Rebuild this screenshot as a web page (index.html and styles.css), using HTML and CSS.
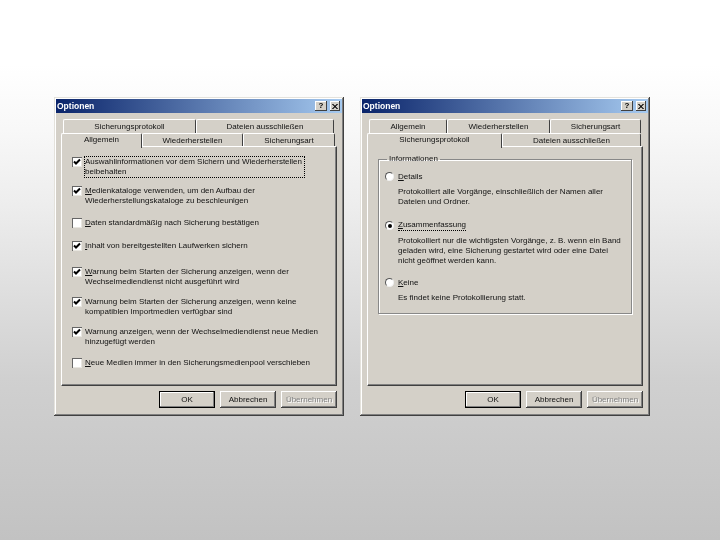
FILE: index.html
```html
<!DOCTYPE html>
<html lang="de">
<head>
<meta charset="utf-8">
<title>Optionen</title>
<link rel="stylesheet" href="styles.css">
</head>
<body>
<section class="window win-left">
  <header class="titlebar">
    <span class="title">Optionen</span>
    <span class="caption-btn help">?</span>
    <span class="caption-btn close"><svg viewBox="0 0 7 6" width="6" height="5"><path d="M0 0 6 6M1 0 7 6M6 0 0 6M7 0 1 6" stroke="#000" stroke-width="0.9" fill="none"/></svg></span>
  </header>
  <div class="tabs">
    <div class="tab-row row-back">
      <div class="tab w133">Sicherungsprotokoll</div>
      <div class="tab w138">Dateien ausschließen</div>
    </div>
    <div class="tab-row">
      <div class="tab active w81">Allgemein</div>
      <div class="tab w101">Wiederherstellen</div>
      <div class="tab w92">Sicherungsart</div>
    </div>
  </div>
  <div class="panel options">
    <div class="check on"><span class="box"><svg viewBox="0 0 8 8" width="8" height="8"><path d="M1 3.5 3 5.5 7 1.5" stroke="#000" stroke-width="2" fill="none"/></svg></span><span class="label focus">Auswahlinformationen vor dem Sichern und Wiederherstellen<br>beibehalten</span></div>
    <div class="check on gap-9"><span class="box"><svg viewBox="0 0 8 8" width="8" height="8"><path d="M1 3.5 3 5.5 7 1.5" stroke="#000" stroke-width="2" fill="none"/></svg></span><span class="label"><u>M</u>edienkataloge verwenden, um den Aufbau der<br>Wiederherstellungskataloge zu beschleunigen</span></div>
    <div class="check gap-12"><span class="box"></span><span class="label"><u>D</u>aten standardmäßig nach Sicherung bestätigen</span></div>
    <div class="check on gap-13"><span class="box"><svg viewBox="0 0 8 8" width="8" height="8"><path d="M1 3.5 3 5.5 7 1.5" stroke="#000" stroke-width="2" fill="none"/></svg></span><span class="label"><u>I</u>nhalt von bereitgestellten Laufwerken sichern</span></div>
    <div class="check on gap-16"><span class="box"><svg viewBox="0 0 8 8" width="8" height="8"><path d="M1 3.5 3 5.5 7 1.5" stroke="#000" stroke-width="2" fill="none"/></svg></span><span class="label"><u>W</u>arnung beim Starten der Sicherung anzeigen, wenn der<br>Wechselmediendienst nicht ausgeführt wird</span></div>
    <div class="check on gap-10"><span class="box"><svg viewBox="0 0 8 8" width="8" height="8"><path d="M1 3.5 3 5.5 7 1.5" stroke="#000" stroke-width="2" fill="none"/></svg></span><span class="label">Warnung beim Starten der Sicherung anzeigen, wenn keine<br>kompatiblen Importmedien verfügbar sind</span></div>
    <div class="check on gap-10"><span class="box"><svg viewBox="0 0 8 8" width="8" height="8"><path d="M1 3.5 3 5.5 7 1.5" stroke="#000" stroke-width="2" fill="none"/></svg></span><span class="label">Warnung anzeigen, wenn der Wechselmediendienst neue Medien<br>hinzugefügt werden</span></div>
    <div class="check gap-11"><span class="box"></span><span class="label"><u>N</u>eue Medien immer in den Sicherungsmedienpool verschieben</span></div>
  </div>
  <footer class="buttons">
    <span class="btn default">OK</span>
    <span class="btn">Abbrechen</span>
    <span class="btn disabled">Übernehmen</span>
  </footer>
</section>

<section class="window win-right">
  <header class="titlebar">
    <span class="title">Optionen</span>
    <span class="caption-btn help">?</span>
    <span class="caption-btn close"><svg viewBox="0 0 7 6" width="6" height="5"><path d="M0 0 6 6M1 0 7 6M6 0 0 6M7 0 1 6" stroke="#000" stroke-width="0.9" fill="none"/></svg></span>
  </header>
  <div class="tabs">
    <div class="tab-row row-back">
      <div class="tab w78">Allgemein</div>
      <div class="tab w103">Wiederherstellen</div>
      <div class="tab w91">Sicherungsart</div>
    </div>
    <div class="tab-row">
      <div class="tab active w135">Sicherungsprotokoll</div>
      <div class="tab w139">Dateien ausschließen</div>
    </div>
  </div>
  <div class="panel log">
    <fieldset class="group">
      <legend>Informationen</legend>
      <div class="radio"><span class="dot"></span><span class="label"><u>D</u>etails</span></div>
      <p class="desc">Protokolliert alle Vorgänge, einschließlich der Namen aller<br>Dateien und Ordner.</p>
      <div class="radio gap-radio"><span class="dot sel"></span><span class="label focus-line"><u>Z</u>usammenfassung</span></div>
      <p class="desc">Protokolliert nur die wichtigsten Vorgänge, z. B. wenn ein Band<br>geladen wird, eine Sicherung gestartet wird oder eine Datei<br>nicht geöffnet werden kann.</p>
      <div class="radio gap-radio-2"><span class="dot"></span><span class="label"><u>K</u>eine</span></div>
      <p class="desc">Es findet keine Protokollierung statt.</p>
    </fieldset>
  </div>
  <footer class="buttons">
    <span class="btn default">OK</span>
    <span class="btn">Abbrechen</span>
    <span class="btn disabled">Übernehmen</span>
  </footer>
</section>
</body>
</html>
```
FILE: styles.css
```css
* { box-sizing: border-box; }
html, body { margin: 0; height: 100%; }
body {
  position: relative;
  width: 720px;
  height: 540px;
  overflow: hidden;
  background: linear-gradient(#ffffff 0%, #ffffff 12%, #f8f8f8 24%, #eeeeee 37%, #d0d0d0 70%, #c2c2c2 100%);
  font: 8px/10px "Liberation Sans", Arial, sans-serif;
  color: #111;
}
.window {
  position: absolute;
  top: 97px;
  width: 290px;
  height: 319px;
  background: #d4d0c8;
  box-shadow: inset -1px -1px 0 #404040, inset 1px 1px 0 #e4e2dc, inset -2px -2px 0 #808080, inset 2px 2px 0 #fff;
  padding: 2px 7px 0;
  display: flex;
  flex-direction: column;
  filter: blur(0.3px);
}
.win-left { left: 54px; }
.win-right { left: 360px; }
.titlebar {
  height: 14px;
  margin: 0 -5px;
  padding: 0 2px 0 1px;
  display: flex;
  align-items: center;
  gap: 3px;
  background: linear-gradient(90deg, #0a246a, #a6caf0);
}
.title { flex: 1; color: #fff; font-weight: bold; font-size: 8.5px; }
.caption-btn {
  width: 10px;
  height: 10px;
  background: #d4d0c8;
  box-shadow: inset -1px -1px 0 #404040, inset 1px 1px 0 #fff;
  display: flex;
  align-items: center;
  justify-content: center;
  font-weight: bold;
  color: #000;
  line-height: 10px;
}
.help { width: 12px; }
.tabs { margin-top: 6px; width: 276px; }
.tab-row { display: flex; align-items: flex-end; height: 14px; }
.row-back { padding-left: 2px; }
.tab {
  height: 14px;
  text-align: center;
  line-height: 14px;
  border: 1px solid #fff;
  border-bottom: 0;
  border-right: 1px solid #404040;
  border-radius: 2px 2px 0 0;
  background: #d4d0c8;
}
.tab.active {
  position: relative;
  z-index: 1;
  height: 15px;
  margin-bottom: -1px;
  line-height: 11px;
}
.w78 { width: 78px; }
.w81 { width: 81px; }
.w91 { width: 91px; }
.w92 { width: 92px; }
.w101 { width: 101px; }
.w103 { width: 103px; }
.w133 { width: 133px; }
.w135 { width: 135px; }
.w138 { width: 138px; }
.w139 { width: 139px; }
.panel {
  width: 276px;
  height: 240px;
  margin-top: -1px;
  border: 1px solid;
  border-color: #fff #404040 #404040 #fff;
  box-shadow: inset -1px -1px 0 #808080;
}
.options { padding: 10px 0 0 10px; }
.check { display: flex; align-items: flex-start; }
.gap-9 { margin-top: 9px; }
.gap-10 { margin-top: 10px; }
.gap-11 { margin-top: 11px; }
.gap-12 { margin-top: 12px; }
.gap-13 { margin-top: 13px; }
.gap-16 { margin-top: 16px; }
.box {
  flex: none;
  width: 10px;
  height: 10px;
  margin-right: 3px;
  background: #fff;
  box-shadow: inset 1px 1px 0 #666, inset -1px -1px 0 #e8e6e0;
  display: flex;
  align-items: center;
  justify-content: center;
}
.label { white-space: nowrap; }
.focus { outline: 1px dotted #000; outline-offset: 0; padding-right: 2px; }
.focus-line { border-bottom: 1px dotted #000; }
.log { padding: 8px 10px 0; }
.group {
  margin: 0;
  width: 254px;
  height: 159px;
  padding: 8px 6px 0;
  border: 1px solid #888;
  box-shadow: 1px 1px 0 #fff, inset 1px 1px 0 #fff;
}
.group legend { padding: 0 2px; margin-left: 2px; line-height: 8px; }
.radio { display: flex; align-items: center; height: 11px; }
.dot {
  flex: none;
  width: 9px;
  height: 9px;
  margin-right: 4px;
  border-radius: 50%;
  background: #fff;
  border: 1px solid #555;
  border-right-color: #f0f0f0;
  border-bottom-color: #f0f0f0;
  display: flex;
  align-items: center;
  justify-content: center;
}
.dot.sel::after {
  content: "";
  width: 4px;
  height: 4px;
  border-radius: 50%;
  background: #000;
}
.desc { margin: 5px 0 0 13px; white-space: nowrap; }
.gap-radio { margin-top: 13px; }
.gap-radio-2 { margin-top: 11px; }
.buttons {
  margin-top: 5px;
  width: 276px;
  display: flex;
  justify-content: flex-end;
  gap: 5px;
}
.btn {
  width: 56px;
  height: 17px;
  display: flex;
  align-items: center;
  justify-content: center;
  background: #d4d0c8;
  box-shadow: inset -1px -1px 0 #404040, inset 1px 1px 0 #fff, inset -2px -2px 0 #808080;
}
.btn.default { outline: 1px solid #000; outline-offset: -1px; box-shadow: inset -2px -2px 0 #808080, inset 2px 2px 0 #fff; }
.btn.disabled { color: #808080; text-shadow: 1px 1px 0 #fff; }
```
